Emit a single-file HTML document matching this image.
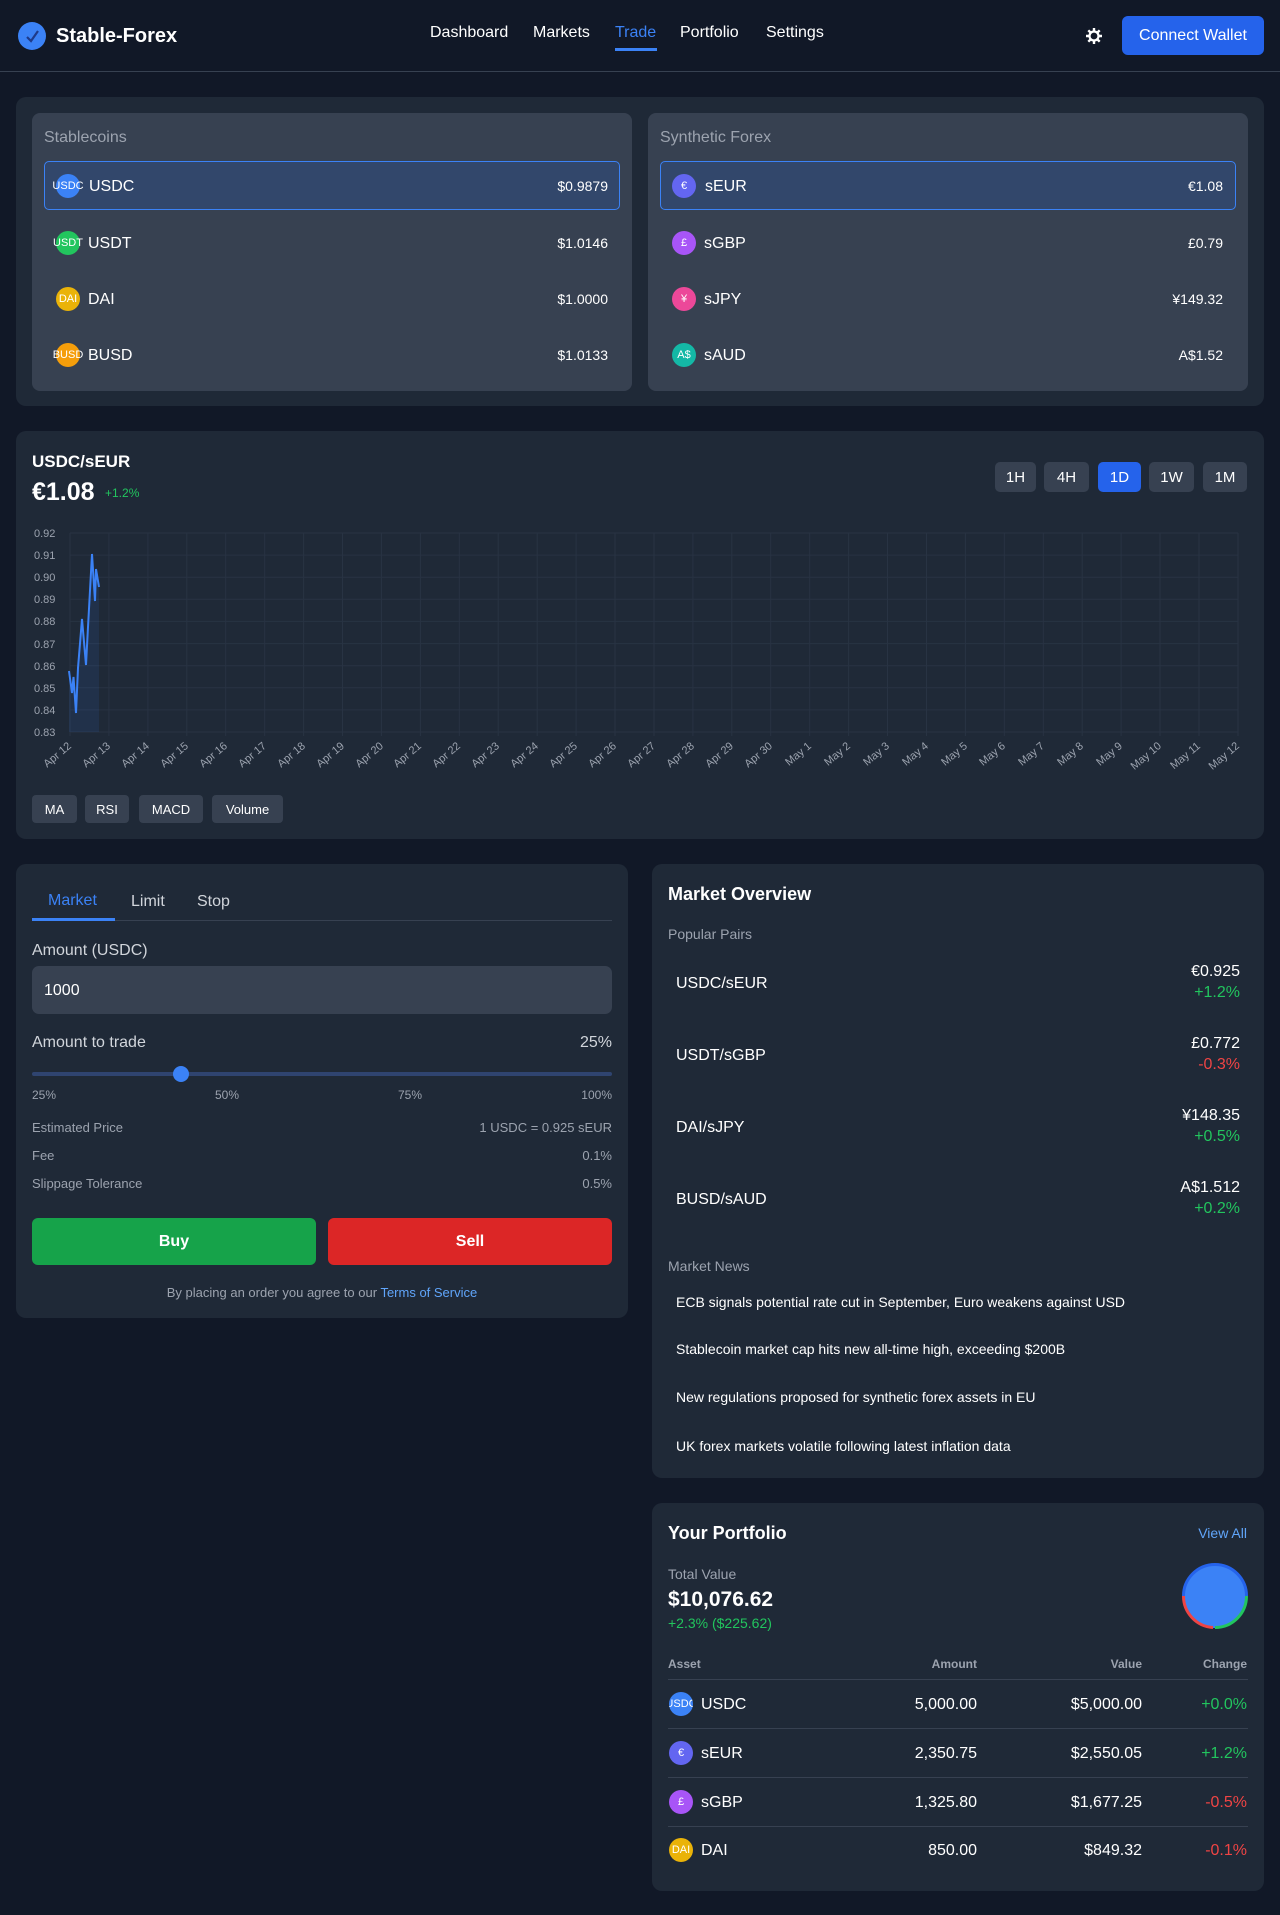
<!DOCTYPE html>
<html><head><meta charset="utf-8">
<style>
*{box-sizing:border-box;margin:0;padding:0}
body{width:1280px;height:1915px;background:#111827;font-family:"Liberation Sans",sans-serif;color:#fff;position:relative;overflow:hidden}
.a{position:absolute}
.panel{position:absolute;background:#1f2937;border-radius:10px}
.card{position:absolute;background:#374151;border-radius:8px}
.ic{position:absolute;width:24px;height:24px;border-radius:50%;color:#fff;font-size:11px;display:flex;align-items:center;justify-content:center;white-space:nowrap}
.gray{color:#9ca3af}
.btn{position:absolute;background:#374151;border-radius:5px;font-size:15px;display:flex;align-items:center;justify-content:center;color:#fff}
.ib{position:absolute;background:#374151;border-radius:4px;font-size:13px;display:flex;align-items:center;justify-content:center;top:795px;height:28px}
.r{text-align:right}
.g{color:#22c55e}.rd{color:#ef4444}
</style></head><body>
<div class="a" style="left:0;top:0;width:1280px;height:72px;border-bottom:1px solid #374151"></div>
<div class="a" style="left:18px;top:22px;width:28px;height:28px;border-radius:50%;background:#3b82f6"></div>
<svg class="a" style="left:18px;top:22px" width="28" height="28"><path d="M9 15 L13 19 L20 9" stroke="#1e3a8a" stroke-width="2.2" fill="none"/></svg>
<div class="a" style="left:56px;top:25px;font-size:20px;font-weight:bold">Stable-Forex</div>
<div class="a" style="left:430px;top:24px;font-size:16px">Dashboard</div>
<div class="a" style="left:533px;top:24px;font-size:16px">Markets</div>
<div class="a" style="left:615px;top:24px;font-size:16px;color:#3b82f6">Trade</div>
<div class="a" style="left:615px;top:48px;width:42px;height:3px;background:#3b82f6"></div>
<div class="a" style="left:680px;top:24px;font-size:16px">Portfolio</div>
<div class="a" style="left:766px;top:24px;font-size:16px">Settings</div>
<svg class="a" style="left:1085px;top:27px" width="18" height="18" viewBox="0 0 18 18"><circle cx="9" cy="9" r="4.5" fill="none" stroke="#fff" stroke-width="2.2"/><g stroke="#fff" stroke-width="2.4"><path d="M9 1v3M9 14v3M1 9h3M14 9h3M3.3 3.3l2.1 2.1M12.6 12.6l2.1 2.1M3.3 14.7l2.1-2.1M12.6 5.4l2.1-2.1"/></g></svg>
<div class="a" style="left:1122px;top:16px;width:142px;height:39px;background:#2563eb;border-radius:6px;font-size:16px;display:flex;align-items:center;justify-content:center">Connect Wallet</div>

<div class="panel" style="left:16px;top:97px;width:1248px;height:309px"></div>
<div class="card" style="left:32px;top:113px;width:600px;height:278px"></div>
<div class="card" style="left:648px;top:113px;width:600px;height:278px"></div>
<div class="a gray" style="left:44px;top:129px;font-size:16px">Stablecoins</div>
<div class="a gray" style="left:660px;top:129px;font-size:16px">Synthetic Forex</div>
<div class="a" style="left:44px;top:161px;width:576px;height:49px;background:#32476b;border:1px solid #3b82f6;border-radius:5px"></div>
<div class="a" style="left:660px;top:161px;width:576px;height:49px;background:#32476b;border:1px solid #3b82f6;border-radius:5px"></div>

<div class="ic" style="left:56px;top:174px;background:#3b82f6">USDC</div><div class="a" style="left:89px;top:178px;font-size:16px">USDC</div><div class="a r" style="left:480px;width:128px;top:178px;font-size:14px">$0.9879</div>
<div class="ic" style="left:56px;top:231px;background:#22c55e">USDT</div><div class="a" style="left:88px;top:235px;font-size:16px">USDT</div><div class="a r" style="left:480px;width:128px;top:235px;font-size:14px">$1.0146</div>
<div class="ic" style="left:56px;top:287px;background:#eab308">DAI</div><div class="a" style="left:88px;top:291px;font-size:16px">DAI</div><div class="a r" style="left:480px;width:128px;top:291px;font-size:14px">$1.0000</div>
<div class="ic" style="left:56px;top:343px;background:#f59e0b">BUSD</div><div class="a" style="left:88px;top:347px;font-size:16px">BUSD</div><div class="a r" style="left:480px;width:128px;top:347px;font-size:14px">$1.0133</div>

<div class="ic" style="left:672px;top:174px;background:#6366f1">€</div><div class="a" style="left:705px;top:178px;font-size:16px">sEUR</div><div class="a r" style="left:1095px;width:128px;top:178px;font-size:14px">€1.08</div>
<div class="ic" style="left:672px;top:231px;background:#a855f7">£</div><div class="a" style="left:704px;top:235px;font-size:16px">sGBP</div><div class="a r" style="left:1095px;width:128px;top:235px;font-size:14px">£0.79</div>
<div class="ic" style="left:672px;top:287px;background:#ec4899">¥</div><div class="a" style="left:704px;top:291px;font-size:16px">sJPY</div><div class="a r" style="left:1095px;width:128px;top:291px;font-size:14px">¥149.32</div>
<div class="ic" style="left:672px;top:343px;background:#14b8a6">A$</div><div class="a" style="left:704px;top:347px;font-size:16px">sAUD</div><div class="a r" style="left:1095px;width:128px;top:347px;font-size:14px">A$1.52</div>

<div class="panel" style="left:16px;top:431px;width:1248px;height:408px"></div>
<div class="a" style="left:32px;top:452px;font-size:17px;font-weight:bold">USDC/sEUR</div>
<div class="a" style="left:32px;top:478px;font-size:25px;font-weight:bold">€1.08</div>
<div class="a g" style="left:105px;top:486px;font-size:12px">+1.2%</div>
<div class="btn" style="left:995px;top:462px;width:41px;height:30px">1H</div>
<div class="btn" style="left:1044px;top:462px;width:45px;height:30px">4H</div>
<div class="btn" style="left:1098px;top:462px;width:43px;height:30px;background:#2563eb">1D</div>
<div class="btn" style="left:1149px;top:462px;width:45px;height:30px">1W</div>
<div class="btn" style="left:1203px;top:462px;width:44px;height:30px">1M</div>
<svg class="a" style="left:0;top:0" width="1280" height="850">
<g stroke="#283343" stroke-width="1">
<path d="M70 533H1238M70 555.1H1238M70 577.2H1238M70 599.3H1238M70 621.4H1238M70 643.6H1238M70 665.7H1238M70 687.8H1238M70 709.9H1238M70 732H1238"/>
<path d="M70 533V736M108.9 533V736M147.9 533V736M186.8 533V736M225.7 533V736M264.7 533V736M303.6 533V736M342.5 533V736M381.4 533V736M420.4 533V736M459.3 533V736M498.2 533V736M537.2 533V736M576.1 533V736M615 533V736M654 533V736M692.9 533V736M731.8 533V736M770.7 533V736M809.7 533V736M848.6 533V736M887.5 533V736M926.5 533V736M965.4 533V736M1004.3 533V736M1043.3 533V736M1082.2 533V736M1121.1 533V736M1160 533V736M1199 533V736M1238 533V736"/>
</g>
<path d="M69 671L72 693L73.5 677L76 713L78 668L82 619L86 665L88 627L92 554L95 601L96 569L99 587L99 732L69 732Z" fill="#3b82f6" fill-opacity="0.1"/>
<path d="M69 671L72 693L73.5 677L76 713L78 668L82 619L86 665L88 627L92 554L95 601L96 569L99 587" fill="none" stroke="#3b82f6" stroke-width="2"/>
<g fill="#9ca3af" font-size="11" font-family="Liberation Sans,sans-serif">
<text x="34" y="537">0.92</text><text x="34" y="559">0.91</text><text x="34" y="581">0.90</text><text x="34" y="603">0.89</text><text x="34" y="625">0.88</text><text x="34" y="648">0.87</text><text x="34" y="670">0.86</text><text x="34" y="692">0.85</text><text x="34" y="714">0.84</text><text x="34" y="736">0.83</text>
</g>
<g fill="#9ca3af" font-size="11" font-family="Liberation Sans,sans-serif" text-anchor="end">
<text transform="translate(72,747) rotate(-40)">Apr 12</text><text transform="translate(111,747) rotate(-40)">Apr 13</text><text transform="translate(150,747) rotate(-40)">Apr 14</text><text transform="translate(189,747) rotate(-40)">Apr 15</text><text transform="translate(228,747) rotate(-40)">Apr 16</text><text transform="translate(267,747) rotate(-40)">Apr 17</text><text transform="translate(306,747) rotate(-40)">Apr 18</text><text transform="translate(345,747) rotate(-40)">Apr 19</text><text transform="translate(384,747) rotate(-40)">Apr 20</text><text transform="translate(422,747) rotate(-40)">Apr 21</text><text transform="translate(461,747) rotate(-40)">Apr 22</text><text transform="translate(500,747) rotate(-40)">Apr 23</text><text transform="translate(539,747) rotate(-40)">Apr 24</text><text transform="translate(578,747) rotate(-40)">Apr 25</text><text transform="translate(617,747) rotate(-40)">Apr 26</text><text transform="translate(656,747) rotate(-40)">Apr 27</text><text transform="translate(695,747) rotate(-40)">Apr 28</text><text transform="translate(734,747) rotate(-40)">Apr 29</text><text transform="translate(773,747) rotate(-40)">Apr 30</text><text transform="translate(812,747) rotate(-40)">May 1</text><text transform="translate(851,747) rotate(-40)">May 2</text><text transform="translate(890,747) rotate(-40)">May 3</text><text transform="translate(929,747) rotate(-40)">May 4</text><text transform="translate(968,747) rotate(-40)">May 5</text><text transform="translate(1006,747) rotate(-40)">May 6</text><text transform="translate(1045,747) rotate(-40)">May 7</text><text transform="translate(1084,747) rotate(-40)">May 8</text><text transform="translate(1123,747) rotate(-40)">May 9</text><text transform="translate(1162,747) rotate(-40)">May 10</text><text transform="translate(1201,747) rotate(-40)">May 11</text><text transform="translate(1240,747) rotate(-40)">May 12</text>
</g>
</svg>
<div class="ib" style="left:32px;width:45px">MA</div>
<div class="ib" style="left:85px;width:44px">RSI</div>
<div class="ib" style="left:139px;width:64px">MACD</div>
<div class="ib" style="left:212px;width:71px">Volume</div>

<div class="panel" style="left:16px;top:864px;width:612px;height:454px"></div>
<div class="a" style="left:32px;top:920px;width:580px;height:1px;background:#374151"></div>
<div class="a" style="left:32px;top:918px;width:83px;height:3px;background:#3b82f6"></div>
<div class="a" style="left:48px;top:892px;font-size:16px;color:#3b82f6">Market</div>
<div class="a" style="left:131px;top:893px;font-size:16px;color:#d1d5db">Limit</div>
<div class="a" style="left:197px;top:893px;font-size:16px;color:#d1d5db">Stop</div>
<div class="a" style="left:32px;top:942px;font-size:16px;color:#d1d5db">Amount (USDC)</div>
<div class="a" style="left:32px;top:966px;width:580px;height:48px;background:#374151;border-radius:7px"></div>
<div class="a" style="left:44px;top:982px;font-size:16px">1000</div>
<div class="a" style="left:32px;top:1034px;font-size:16px;color:#d1d5db">Amount to trade</div>
<div class="a r" style="left:500px;width:112px;top:1034px;font-size:16px;color:#d1d5db">25%</div>
<div class="a" style="left:32px;top:1072px;width:580px;height:4px;background:#2f4470;border-radius:2px"></div>
<div class="a" style="left:173px;top:1066px;width:16px;height:16px;border-radius:50%;background:#3b82f6"></div>
<div class="a" style="left:32px;top:1088px;font-size:12px;color:#9ca3af">25%</div>
<div class="a" style="left:215px;top:1088px;font-size:12px;color:#9ca3af">50%</div>
<div class="a" style="left:398px;top:1088px;font-size:12px;color:#9ca3af">75%</div>
<div class="a r" style="left:550px;width:62px;top:1088px;font-size:12px;color:#9ca3af">100%</div>
<div class="a" style="left:32px;top:1120px;font-size:13px;color:#9ca3af">Estimated Price</div>
<div class="a r" style="left:400px;width:212px;top:1120px;font-size:13px;color:#9ca3af">1 USDC = 0.925 sEUR</div>
<div class="a" style="left:32px;top:1148px;font-size:13px;color:#9ca3af">Fee</div>
<div class="a r" style="left:500px;width:112px;top:1148px;font-size:13px;color:#9ca3af">0.1%</div>
<div class="a" style="left:32px;top:1176px;font-size:13px;color:#9ca3af">Slippage Tolerance</div>
<div class="a r" style="left:500px;width:112px;top:1176px;font-size:13px;color:#9ca3af">0.5%</div>
<div class="a" style="left:32px;top:1218px;width:284px;height:47px;background:#16a34a;border-radius:6px;display:flex;align-items:center;justify-content:center;font-weight:bold;font-size:16px">Buy</div>
<div class="a" style="left:328px;top:1218px;width:284px;height:47px;background:#dc2626;border-radius:6px;display:flex;align-items:center;justify-content:center;font-weight:bold;font-size:16px">Sell</div>
<div class="a" style="left:32px;width:580px;top:1285px;font-size:13px;color:#9ca3af;text-align:center">By placing an order you agree to our <span style="color:#60a5fa">Terms of Service</span></div>

<div class="panel" style="left:652px;top:864px;width:612px;height:614px"></div>
<div class="a" style="left:668px;top:884px;font-size:18px;font-weight:bold">Market Overview</div>
<div class="a gray" style="left:668px;top:926px;font-size:14px">Popular Pairs</div>
<div class="a" style="left:676px;top:975px;font-size:16px">USDC/sEUR</div>
<div class="a r" style="left:1100px;width:140px;top:963px;font-size:16px">€0.925<br><span class="g" style="line-height:24px">+1.2%</span></div>
<div class="a" style="left:676px;top:1047px;font-size:16px">USDT/sGBP</div>
<div class="a r" style="left:1100px;width:140px;top:1035px;font-size:16px">£0.772<br><span class="rd" style="line-height:24px">-0.3%</span></div>
<div class="a" style="left:676px;top:1119px;font-size:16px">DAI/sJPY</div>
<div class="a r" style="left:1100px;width:140px;top:1107px;font-size:16px">¥148.35<br><span class="g" style="line-height:24px">+0.5%</span></div>
<div class="a" style="left:676px;top:1191px;font-size:16px">BUSD/sAUD</div>
<div class="a r" style="left:1100px;width:140px;top:1179px;font-size:16px">A$1.512<br><span class="g" style="line-height:24px">+0.2%</span></div>
<div class="a gray" style="left:668px;top:1258px;font-size:14px">Market News</div>
<div class="a" style="left:676px;top:1294px;font-size:14px">ECB signals potential rate cut in September, Euro weakens against USD</div>
<div class="a" style="left:676px;top:1341px;font-size:14px">Stablecoin market cap hits new all-time high, exceeding $200B</div>
<div class="a" style="left:676px;top:1389px;font-size:14px">New regulations proposed for synthetic forex assets in EU</div>
<div class="a" style="left:676px;top:1438px;font-size:14px">UK forex markets volatile following latest inflation data</div>

<div class="panel" style="left:652px;top:1503px;width:612px;height:388px"></div>
<div class="a" style="left:668px;top:1523px;font-size:18px;font-weight:bold">Your Portfolio</div>
<div class="a r" style="left:1150px;width:97px;top:1525px;font-size:14px;color:#60a5fa">View All</div>
<div class="a gray" style="left:668px;top:1566px;font-size:14px">Total Value</div>
<div class="a" style="left:668px;top:1588px;font-size:21px;font-weight:bold">$10,076.62</div>
<div class="a g" style="left:668px;top:1615px;font-size:14px">+2.3% ($225.62)</div>
<svg class="a" style="left:1182px;top:1563px" width="66" height="66" viewBox="0 0 66 66"><circle cx="33" cy="33" r="32" fill="#3b82f6"/><path d="M1.5 33 A31.5 31.5 0 0 1 64.5 33" fill="none" stroke="#2563eb" stroke-width="3"/><path d="M1.5 33 A31.5 31.5 0 0 0 31 64.5" fill="none" stroke="#ef4444" stroke-width="3"/><path d="M33 64.5 A31.5 31.5 0 0 0 64.5 33" fill="none" stroke="#22c55e" stroke-width="3"/></svg>
<div class="a" style="left:668px;top:1657px;font-size:12px;font-weight:bold;color:#9ca3af">Asset</div>
<div class="a r" style="left:877px;width:100px;top:1657px;font-size:12px;font-weight:bold;color:#9ca3af">Amount</div>
<div class="a r" style="left:1042px;width:100px;top:1657px;font-size:12px;font-weight:bold;color:#9ca3af">Value</div>
<div class="a r" style="left:1147px;width:100px;top:1657px;font-size:12px;font-weight:bold;color:#9ca3af">Change</div>
<div class="a" style="left:668px;top:1679px;width:580px;height:1px;background:#374151"></div>
<div class="a" style="left:668px;top:1728px;width:580px;height:1px;background:#374151"></div>
<div class="a" style="left:668px;top:1777px;width:580px;height:1px;background:#374151"></div>
<div class="a" style="left:668px;top:1826px;width:580px;height:1px;background:#374151"></div>

<div class="ic" style="left:669px;top:1692px;background:#3b82f6;overflow:hidden">USDC</div><div class="a" style="left:701px;top:1696px;font-size:16px">USDC</div>
<div class="a r" style="left:850px;width:127px;top:1696px;font-size:16px">5,000.00</div><div class="a r" style="left:1015px;width:127px;top:1696px;font-size:16px">$5,000.00</div><div class="a r g" style="left:1147px;width:100px;top:1696px;font-size:16px">+0.0%</div>
<div class="ic" style="left:669px;top:1741px;background:#6366f1">€</div><div class="a" style="left:701px;top:1745px;font-size:16px">sEUR</div>
<div class="a r" style="left:850px;width:127px;top:1745px;font-size:16px">2,350.75</div><div class="a r" style="left:1015px;width:127px;top:1745px;font-size:16px">$2,550.05</div><div class="a r g" style="left:1147px;width:100px;top:1745px;font-size:16px">+1.2%</div>
<div class="ic" style="left:669px;top:1790px;background:#a855f7">£</div><div class="a" style="left:701px;top:1794px;font-size:16px">sGBP</div>
<div class="a r" style="left:850px;width:127px;top:1794px;font-size:16px">1,325.80</div><div class="a r" style="left:1015px;width:127px;top:1794px;font-size:16px">$1,677.25</div><div class="a r rd" style="left:1147px;width:100px;top:1794px;font-size:16px">-0.5%</div>
<div class="ic" style="left:669px;top:1838px;background:#eab308">DAI</div><div class="a" style="left:701px;top:1842px;font-size:16px">DAI</div>
<div class="a r" style="left:850px;width:127px;top:1842px;font-size:16px">850.00</div><div class="a r" style="left:1015px;width:127px;top:1842px;font-size:16px">$849.32</div><div class="a r rd" style="left:1147px;width:100px;top:1842px;font-size:16px">-0.1%</div>
</body></html>
